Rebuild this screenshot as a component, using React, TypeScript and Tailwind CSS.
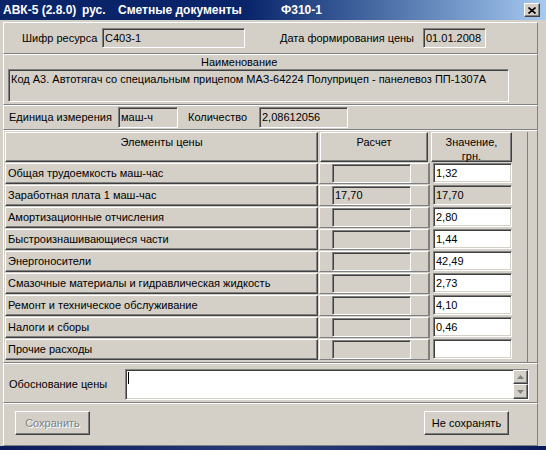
import React from "react";

const sunken =
  "border border-t-[#808080] border-l-[#808080] border-b-white border-r-white shadow-[inset_1px_1px_0_#404040,inset_-1px_-1px_0_#d4d0c8]";
const raised =
  "border border-t-white border-l-white border-b-[#404040] border-r-[#404040] shadow-[inset_-1px_-1px_0_#808080,inset_1px_1px_0_#d4d0c8]";
const panel = "border border-t-white border-l-white border-b-[#808080] border-r-[#808080]";

const rows = [
  { name: "Общая трудоемкость маш-час", calc: "", value: "1,32", edit: true },
  { name: "Заработная плата 1 маш-час", calc: "17,70", value: "17,70", edit: false },
  { name: "Амортизационные отчисления", calc: "", value: "2,80", edit: true },
  { name: "Быстроизнашивающиеся части", calc: "", value: "1,44", edit: true },
  { name: "Энергоносители", calc: "", value: "42,49", edit: true },
  { name: "Смазочные материалы и гидравлическая жидкость", calc: "", value: "2,73", edit: true },
  { name: "Ремонт и техническое обслуживание", calc: "", value: "4,10", edit: true },
  { name: "Налоги и сборы", calc: "", value: "0,46", edit: true },
  { name: "Прочие расходы", calc: "", value: "", edit: true },
];

function Field({ text, w, h, white }: { text: string; w: string; h: string; white?: boolean }) {
  return (
    <div
      className={`${sunken} ${w} ${h} ${white ? "bg-white" : "bg-[#d4d0c8]"} flex items-center pl-[2px] overflow-hidden whitespace-nowrap`}
    >
      {text}
    </div>
  );
}

export default function App() {
  return (
    <div className="w-[546px] h-[450px] overflow-hidden bg-[#d4d0c8] flex flex-col text-[11px] leading-[13px] text-black font-['Liberation_Sans',Arial,sans-serif]">
      {/* title bar */}
      <div className="h-[20px] flex bg-linear-to-r from-[#0a246a] from-45% to-[#a6caf0] text-white font-bold text-[12px] leading-[14px] whitespace-nowrap">
        <div className="w-[82px] pl-[3px] pt-[3px]">АВК-5 (2.8.0)</div>
        <div className="w-[36px] pt-[3px]">рус.</div>
        <div className="w-[163px] pt-[3px]">Сметные документы</div>
        <div className="pt-[3px]">Ф310-1</div>
        <div className={`${raised} bg-[#d4d0c8] ml-auto mr-[6px] mt-[3px] w-[16px] h-[14px] flex items-center justify-center`}>
          <svg width="8" height="7" viewBox="0 0 8 7">
            <path d="M0.5 0.5 L7.5 6.5 M7.5 0.5 L0.5 6.5" stroke="#000" strokeWidth="1.6" />
          </svg>
        </div>
      </div>

      <div className="flex-1 flex flex-col pl-[3px] pr-[8px] pt-[2px]">
        {/* resource code */}
        <div className={`${panel} h-[32px] flex items-start pt-[5px]`}>
          <div className="ml-[18px] w-[80px] h-[20px] flex items-center">Шифр ресурса</div>
          <Field text="С403-1" w="w-[143px]" h="h-[20px]" />
          <div className="ml-[35px] w-[143px] h-[20px] flex items-center">Дата формирования цены</div>
          <Field text="01.01.2008" w="w-[63px]" h="h-[20px]" />
        </div>

        {/* name */}
        <div className={`${panel} h-[51px] flex flex-col`}>
          <div className="pl-[197px] pt-[1px] h-[14px]">Наименование</div>
          <div className={`${sunken} ml-[4px] w-[501px] h-[33px] bg-[#d4d0c8] pl-[2px] pt-[3px] whitespace-nowrap overflow-hidden`}>
            Код А3. Автотягач со специальным прицепом МАЗ-64224 Полуприцеп - панелевоз ПП-1307А
          </div>
        </div>

        {/* unit */}
        <div className={`${panel} h-[25px] flex items-start pt-[1px]`}>
          <div className="ml-[5px] w-[109px] h-[21px] flex items-center">Единица измерения</div>
          <Field text="маш-ч" w="w-[60px]" h="h-[21px]" />
          <div className="ml-[10px] w-[71px] h-[21px] flex items-center">Количество</div>
          <Field text="2,08612056" w="w-[89px]" h="h-[21px]" />
        </div>

        {/* price elements table */}
        <div className={`${panel} h-[233px] pt-[1px]`}>
          <div className="ml-[1px] w-[523px] h-[230px] border-r border-r-[#808080]">
            <div className="flex h-[31px] pb-[1px]">
              <div className={`${raised} w-[313px] flex justify-center pt-[3px]`}>Элементы цены</div>
              <div className={`${raised} ml-[2px] w-[108px] flex justify-center pt-[3px]`}>Расчет</div>
              <div className={`${raised} ml-[3px] w-[81px] flex flex-col items-center pt-[2px] leading-[14px]`}>
                <span>Значение,</span>
                <span>грн.</span>
              </div>
            </div>
            {rows.map((r) => (
              <div key={r.name} className="flex h-[22px] pb-[1px]">
                <div className={`${raised} w-[313px] flex items-center pl-[2px] whitespace-nowrap`}>{r.name}</div>
                <div className={`${panel} ml-[1px] w-[110px] flex items-start pl-[12px]`}>
                  <Field text={r.calc} w="w-[79px]" h="h-[19px]" />
                </div>
                <div className="w-[83px] flex items-start pl-[3px] border-l border-l-[#808080]">
                  <Field text={r.value} w="w-[79px]" h="h-[20px]" white={r.edit} />
                </div>
              </div>
            ))}
          </div>
        </div>

        {/* justification */}
        <div className={`${panel} h-[40px] flex items-start pt-[5px]`}>
          <div className="ml-[5px] w-[116px] h-[31px] flex items-center">Обоснование цены</div>
          <div className={`${sunken} w-[404px] h-[31px] bg-white flex`}>
            <div className="flex-1 pl-[2px] pt-[2px]">
              <div className="w-[1px] h-[12px] bg-black" />
            </div>
            <div className="w-[15px] flex flex-col bg-[#d4d0c8]">
              <div className={`${raised} h-[14px] flex items-center justify-center`}>
                <svg width="7" height="4" viewBox="0 0 7 4">
                  <path d="M3.5 0 L7 4 L0 4 Z" fill="#808080" />
                </svg>
              </div>
              <div className={`${raised} h-[15px] flex items-center justify-center`}>
                <svg width="7" height="4" viewBox="0 0 7 4">
                  <path d="M0 0 L7 0 L3.5 4 Z" fill="#808080" />
                </svg>
              </div>
            </div>
          </div>
        </div>

        {/* buttons */}
        <div className={`${panel} h-[43px] flex items-start pt-[7px]`}>
          <div className={`${raised} ml-[11px] w-[75px] h-[24px] flex items-center justify-center text-[#808080] [text-shadow:1px_1px_0_#fff]`}>
            Сохранить
          </div>
          <div className={`${raised} ml-auto mr-[28px] w-[85px] h-[24px] flex items-center justify-center`}>
            Не сохранять
          </div>
        </div>
      </div>

      <div className="h-[4px] bg-linear-to-r from-[#0c1a5c] via-[#2a3c7a] to-[#0c1a5c]" />
    </div>
  );
}
